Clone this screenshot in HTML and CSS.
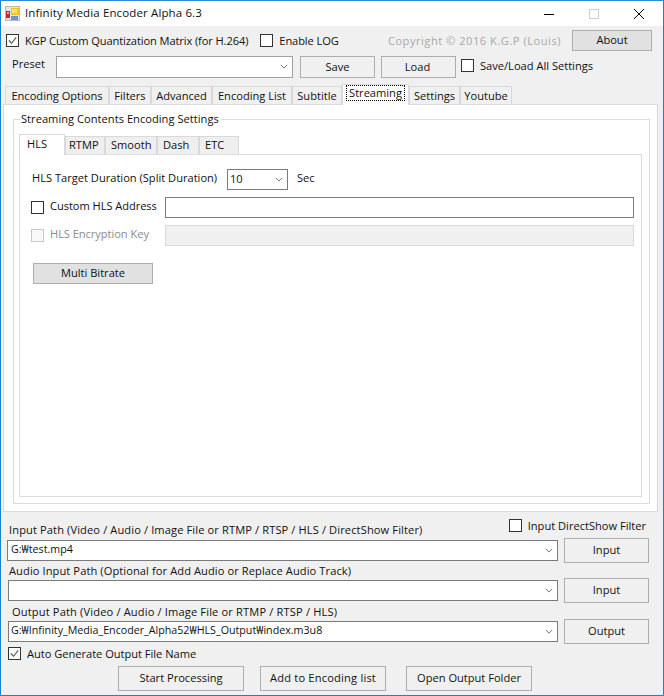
FILE: index.html
```html
<!DOCTYPE html>
<html lang="en">
<head>
<meta charset="utf-8">
<title>Infinity Media Encoder Alpha 6.3</title>
<link rel="stylesheet" href="styles.css">
</head>
<body>
<div class="window">
  <header class="titlebar">
    <svg class="app-icon" width="16" height="16" viewBox="0 0 16 16">
      <rect x="0" y="0" width="15" height="15" fill="#b9b9b9"/>
      <rect x="1" y="1" width="13" height="13" fill="#e4e4e4"/>
      <rect x="1" y="5" width="4" height="7" fill="#c0302a"/>
      <rect x="2" y="6" width="2" height="2" fill="#e8a8a0"/>
      <rect x="6" y="2" width="8" height="7" fill="#f6c21c"/>
      <rect x="7" y="3" width="5" height="4" fill="#fbe27a"/>
      <rect x="6" y="10" width="7" height="4" fill="#6b93d6"/>
    </svg>
    <span class="title-text">Infinity Media Encoder Alpha 6.3</span>
    <div class="win-controls">
      <svg width="12" height="12" viewBox="0 0 12 12"><path d="M1 6.500H11" stroke="#000" fill="none"/></svg>
      <svg width="12" height="12" viewBox="0 0 12 12"><rect x="1.500" y="1.500" width="9" height="9" stroke="#cfcfcf" fill="none"/></svg>
      <svg width="12" height="12" viewBox="0 0 12 12"><path d="M1 1L11 11M11 1L1 11" stroke="#000" fill="none"/></svg>
    </div>
  </header>

  <div class="row-top">
    <label class="check kgp-check"><span class="box"><svg viewBox="0 0 12 12"><path d="M2 6L5 9L10 2.500" stroke="#555" stroke-width="1.200" fill="none"/></svg></span>KGP Custom Quantization Matrix (for H.264)</label>
    <label class="check enable-log"><span class="box"></span>Enable LOG</label>
    <span class="copyright">Copyright © 2016 K.G.P (Louis)</span>
    <button class="btn btn-about">About</button>
  </div>

  <div class="row-preset">
    <span class="preset-label">Preset</span>
    <div class="combo combo-preset"><span></span><svg class="chev" viewBox="0 0 10 6"><path d="M1 1L5 5L9 1" stroke="#555" fill="none"/></svg></div>
    <button class="btn btn-flat btn-save">Save</button>
    <button class="btn btn-flat btn-load">Load</button>
    <label class="check all-settings"><span class="box"></span>Save/Load All Settings</label>
  </div>

  <nav class="tabs main-tabs">
    <span class="tab t1">Encoding Options</span>
    <span class="tab t2">Filters</span>
    <span class="tab t3">Advanced</span>
    <span class="tab t4">Encoding List</span>
    <span class="tab t5">Subtitle</span>
    <span class="tab tab-active t6"><span class="focus">Streaming</span></span>
    <span class="tab t7">Settings</span>
    <span class="tab t8">Youtube</span>
  </nav>

  <main class="panel">
    <fieldset class="group">
      <legend>Streaming Contents Encoding Settings</legend>
      <nav class="tabs inner-tabs">
        <span class="tab tab-active i1">HLS</span>
        <span class="tab i2">RTMP</span>
        <span class="tab i3">Smooth</span>
        <span class="tab i4">Dash</span>
        <span class="tab i5">ETC</span>
      </nav>
      <section class="inner-panel">
        <div class="hls-row">
          <span>HLS Target Duration (Split Duration)</span>
          <div class="combo combo-small"><span>10</span><svg class="chev" viewBox="0 0 10 6"><path d="M1 1L5 5L9 1" stroke="#555" fill="none"/></svg></div>
          <span class="sec">Sec</span>
        </div>
        <div class="addr-row">
          <label class="check"><span class="box"></span>Custom HLS Address</label>
          <div class="field"></div>
        </div>
        <div class="addr-row addr-disabled">
          <label class="check check-disabled"><span class="box"></span>HLS Encryption Key</label>
          <div class="field field-disabled"></div>
        </div>
        <button class="btn btn-multi">Multi Bitrate</button>
      </section>
    </fieldset>
  </main>

  <section class="paths">
    <div class="path-label-row">
      <span class="input-label">Input Path (Video / Audio / Image File or RTMP / RTSP / HLS / DirectShow Filter)</span>
      <label class="check ds-check"><span class="box"></span>Input DirectShow Filter</label>
    </div>
    <div class="path-row">
      <div class="combo combo-path c-first"><span>G:₩test.mp4</span><svg class="chev" viewBox="0 0 10 6"><path d="M1 1L5 5L9 1" stroke="#555" fill="none"/></svg></div>
      <button class="btn btn-flat btn-path">Input</button>
    </div>
    <div class="path-label audio-label">Audio Input Path (Optional for Add Audio or Replace Audio Track)</div>
    <div class="path-row">
      <div class="combo combo-path"><span></span><svg class="chev" viewBox="0 0 10 6"><path d="M1 1L5 5L9 1" stroke="#555" fill="none"/></svg></div>
      <button class="btn btn-flat btn-path">Input</button>
    </div>
    <div class="path-label output-label">Output Path (Video / Audio / Image File or RTMP / RTSP / HLS)</div>
    <div class="path-row">
      <div class="combo combo-path"><span>G:₩Infinity_Media_Encoder_Alpha52₩HLS_Output₩index.m3u8</span><svg class="chev" viewBox="0 0 10 6"><path d="M1 1L5 5L9 1" stroke="#555" fill="none"/></svg></div>
      <button class="btn btn-flat btn-path">Output</button>
    </div>
    <label class="check auto-check"><span class="box"><svg viewBox="0 0 12 12"><path d="M2 6L5 9L10 2.500" stroke="#555" stroke-width="1.200" fill="none"/></svg></span>Auto Generate Output File Name</label>
    <div class="actions">
      <button class="btn btn-flat btn-action">Start Processing</button>
      <button class="btn btn-flat btn-action act-2">Add to Encoding list</button>
      <button class="btn btn-flat btn-action act-3">Open Output Folder</button>
    </div>
  </section>
</div>
</body>
</html>
```
FILE: styles.css
```css
* { box-sizing: border-box; }
html, body { margin: 0; padding: 0; }
body {
  font-family: "Open Sans", "Noto Sans", sans-serif;
  font-size: 11.1px;
  color: #111;
  background: #f0f0f0;
}
.window {
  width: 664px;
  height: 696px;
  border: 1px solid #1783d0;
  border-top-color: #2a8ad4;
  background: #f0f0f0;
  overflow: hidden;
}
.titlebar {
  height: 25px;
  background: #fff;
  display: flex;
  align-items: center;
  padding-left: 4px;
}
.app-icon { flex: none; }
.title-text { margin-left: 4px; font-size: 11.5px; letter-spacing: 0.13px; position: relative; top: -1px; }
.win-controls {
  margin-left: auto;
  display: flex;
  gap: 33px;
  padding-right: 18px;
}
.win-controls svg { display: block; }

.check { display: inline-flex; align-items: center; white-space: nowrap; }
.box {
  width: 13px;
  height: 13px;
  border: 1px solid #333;
  background: #fff;
  flex: none;
  margin-right: 6px;
  display: block;
}
.box svg { display: block; width: 11px; height: 11px; }
.check-disabled { color: #8b8b8b; letter-spacing: -0.15px; }
.check-disabled .box { border-color: #c8c8c8; background: #f9f9f9; }

.btn {
  font: inherit;
  color: inherit;
  height: 22px;
  padding: 0 0 2px;
  background: #e1e1e1;
  border: 1px solid #adadad;
  display: block;
}
.btn-flat { background: #f0f0f0; }

.row-top {
  display: flex;
  align-items: center;
  height: 20px;
  margin-top: 4px;
  padding-left: 5px;
  padding-bottom: 0;
}
.kgp-check { letter-spacing: -0.1px; }
.enable-log { margin-left: 12px; letter-spacing: -0.1px; }
.copyright { color: #a8a8a8; margin-left: auto; margin-right: 11px; letter-spacing: 0.52px; }
.btn-about { width: 80px; height: 21px; margin-right: 11px; margin-top: 1px; }

.row-preset {
  display: flex;
  align-items: center;
  height: 23px;
  margin-top: 5px;
  padding-left: 11px;
}
.preset-label { width: 44px; position: relative; top: -3px; }
.combo {
  height: 22px;
  background: #fff;
  border: 1px solid #7a7a7a;
  display: flex;
  align-items: center;
  padding: 0 4px 0 2px;
  white-space: nowrap;
}
.combo > span { flex: 1; overflow: hidden; padding-bottom: 3px; }
.chev { width: 8px; height: 5px; flex: none; }
.combo-preset { width: 237px; border-color: #a0a0a0; }
.btn-save { width: 75px; margin-left: 7px; padding: 0; }
.btn-load { width: 75px; margin-left: 6px; padding: 0 2px 0 0; }
.all-settings { margin-left: 5px; position: relative; top: -1px; }

.tabs { display: flex; align-items: flex-end; }
.tab {
  height: 18px;
  background: #f0f0f0;
  border: 1px solid #d9d9d9;
  border-bottom: 0;
  display: flex;
  align-items: center;
  justify-content: center;
  white-space: nowrap;
}
.tab-active { background: #fff; position: relative; z-index: 2; margin-bottom: -1px; height: 21px; }
.focus { border: 1px dotted #000; padding: 0 2px; line-height: 14px; position: relative; top: -2px; }
.main-tabs { margin-top: 6px; padding-left: 4px; height: 20px; }
.t1 { width: 104px; } .t2 { width: 42px; } .t3 { width: 61px; } .t4 { width: 80px; }
.t5 { width: 50px; } .t6 { width: 67px; } .t7 { width: 51px; } .t8 { width: 52px; }

.panel {
  margin-left: 2px;
  width: 655px;
  height: 408px;
  background: #fff;
  border: 1px solid #d9d9d9;
  padding: 6px 7px 0 9px;
}
.group {
  margin: 0;
  padding: 0 7px 0 5px;
  height: 393px;
  width: 637px;
  border: 1px solid #dcdcdc;
  min-width: 0;
}
.group legend { padding: 0 2px 0 1px; margin-left: 1px; line-height: 16px; letter-spacing: 0.03px; }
.inner-tabs { height: 20px; margin-top: 7px; }
.inner-tabs .tab { background: #efefef; justify-content: flex-start; padding-bottom: 2px; }
.inner-tabs .tab-active { height: 21px; background: #fff; padding-bottom: 4px; }
.i1 { width: 46px; padding-left: 7px; }
.i2 { width: 40px; padding-left: 3px; }
.i3 { width: 52px; padding-left: 5px; }
.i4 { width: 42px; padding-left: 5px; }
.i5 { width: 40px; padding-left: 5px; }
.inner-panel {
  height: 343px;
  border: 1px solid #dcdcdc;
  padding: 14px 7px 0 12px;
}
.hls-row { display: flex; align-items: center; height: 21px; }
.hls-row > span:first-child { width: 195px; padding-bottom: 5px; }
.combo-small { width: 61px; height: 21px; }
.sec { margin-left: 9px; padding-bottom: 5px; }
.addr-row { display: flex; align-items: center; height: 21px; margin-top: 7px; }
.addr-row .check { width: 134px; margin-left: -1px; letter-spacing: -0.05px; line-height: 13px; padding-bottom: 4px; }
.addr-row .box { margin-top: 3px; }
.field { flex: 1; height: 21px; background: #fff; border: 1px solid #7a7a7a; }
.field-disabled { background: #f0f0f0; border: 1px solid #d9d9d9; }
.btn-multi { width: 120px; height: 21px; margin: 17px 0 0 1px; }

.paths { padding: 0 14px 0 6px; }
.path-label-row { display: flex; justify-content: space-between; height: 26px; }
.input-label { margin: 10px 0 0 2px; letter-spacing: 0.115px; }
.ds-check { align-self: flex-start; height: 16px; margin: 5px 3px 0 0; }
.path-row { display: flex; align-items: center; justify-content: space-between; height: 25px; }
.combo-path { width: 550px; height: 21px; margin-left: 1px; font-size: 10.7px; }
.c-first { width: 551px; margin-left: 0; padding-left: 3px; }
.btn-path { width: 85px; height: 25px; }
.path-label { height: 15px; line-height: 15px; }
.audio-label { margin-left: 2px; letter-spacing: 0.09px; }
.output-label { margin: 1px 0 0 5px; letter-spacing: 0.15px; }
.auto-check { margin: 3px 0 0 1px; height: 13px; letter-spacing: -0.02px; }
.actions { display: flex; margin: 3px 0 0 111px; }
.btn-action { width: 126px; height: 25px; }
.act-2 { margin-left: 16px; letter-spacing: 0.2px; }
.act-3 { margin-left: 20px; }
```
